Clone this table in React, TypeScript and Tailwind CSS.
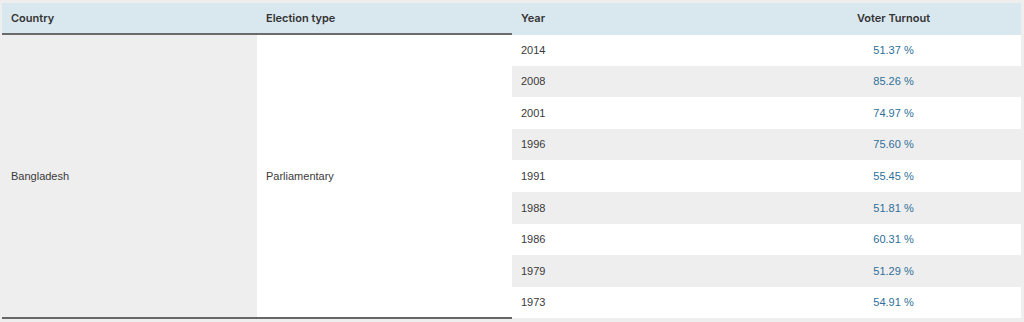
import React from "react";

const rows: [string, string][] = [
  ["2014", "51.37 %"],
  ["2008", "85.26 %"],
  ["2001", "74.97 %"],
  ["1996", "75.60 %"],
  ["1991", "55.45 %"],
  ["1988", "51.81 %"],
  ["1986", "60.31 %"],
  ["1979", "51.29 %"],
  ["1973", "54.91 %"],
];

export default function App() {
  return (
    <div className="w-[1024px] h-[322px] bg-[#eeeeee] pt-[3px] pl-[2px] pr-[3px] overflow-hidden">
      <table
        className="w-full border-collapse table-fixed text-[11px] text-[#3a3a3a]"
        style={{ fontFamily: '"Liberation Sans", Arial, sans-serif' }}
      >
        <colgroup>
          <col className="w-[255px]" />
          <col className="w-[255px]" />
          <col className="w-[254px]" />
          <col />
        </colgroup>
        <thead>
          <tr
            className="bg-[#d9e7ee] h-[31px] text-[11px] font-semibold text-[#333333]"
            style={{ fontFamily: 'Inter, "Liberation Sans", sans-serif' }}
          >
            <th className="text-left pl-[9px] font-semibold border-b-2 border-[#6b6b6b] align-middle">Country</th>
            <th className="text-left pl-[9px] font-semibold border-b-2 border-[#6b6b6b] align-middle">Election type</th>
            <th className="text-left pl-[9px] font-semibold align-middle border-b-2 border-[#d9e7ee]">Year</th>
            <th className="text-center font-semibold align-middle border-b-2 border-[#d9e7ee]">Voter Turnout</th>
          </tr>
        </thead>
        <tbody>
          {rows.map(([year, pct], i) => (
            <tr key={year} className="h-[31.6px]">
              {i === 0 && (
                <>
                  <td
                    rowSpan={rows.length}
                    className="bg-[#eeeeee] pl-[9px] align-middle border-b-2 border-[#666666]"
                  >
                    Bangladesh
                  </td>
                  <td
                    rowSpan={rows.length}
                    className="bg-white pl-[9px] align-middle border-b-2 border-[#666666]"
                  >
                    Parliamentary
                  </td>
                </>
              )}
              <td className={`pl-[9px] align-middle ${i % 2 === 0 ? "bg-white" : "bg-[#eeeeee]"}`}>{year}</td>
              <td className={`text-center align-middle text-[#2f6f98] ${i % 2 === 0 ? "bg-white" : "bg-[#eeeeee]"}`}>{pct}</td>
            </tr>
          ))}
        </tbody>
      </table>
    </div>
  );
}
